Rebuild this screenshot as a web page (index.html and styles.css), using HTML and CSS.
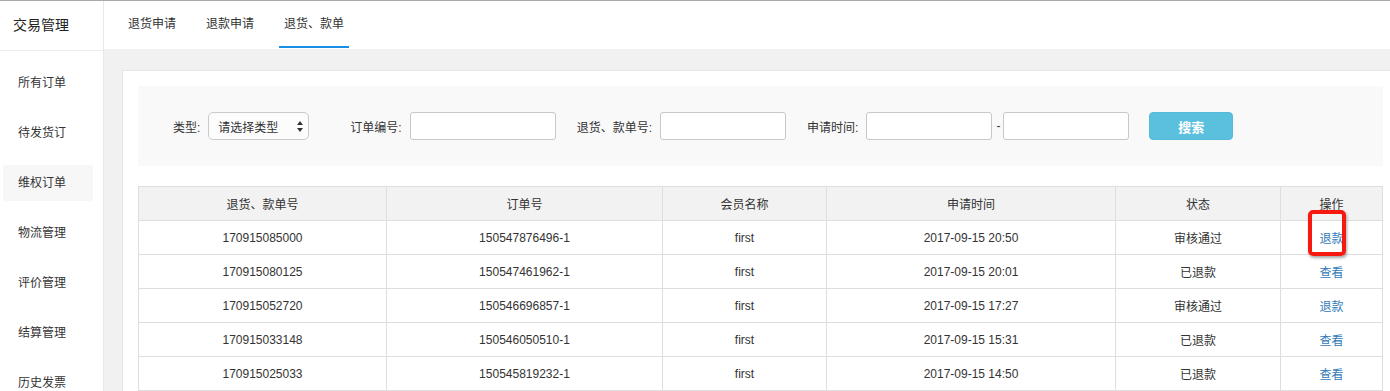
FILE: index.html
```html
<!DOCTYPE html>
<html lang="zh-CN">
<head>
    <meta charset="UTF-8">
    <meta name="viewport" content="width=device-width, initial-scale=1.0">
    <title>交易管理 - 退货、款单</title>
    <link rel="stylesheet" href="styles.css">
</head>
<body>
    <div class="layout">
        <div class="sidebar">
            <div class="sidebar-title">交易管理</div>
            <ul class="menu">
                <li class="menu-item">所有订单</li>
                <li class="menu-item">待发货订</li>
                <li class="menu-item active">维权订单</li>
                <li class="menu-item">物流管理</li>
                <li class="menu-item">评价管理</li>
                <li class="menu-item">结算管理</li>
                <li class="menu-item">历史发票</li>
            </ul>
        </div>

        <div class="main">
            <div class="tabs">
                <a class="tab">退货申请</a>
                <a class="tab">退款申请</a>
                <a class="tab active">退货、款单</a>
            </div>

            <div class="card">
                <div class="search">
                    <label class="search-label">类型:</label>
                    <div class="select">
                        <span>请选择类型</span>
                        <svg class="select-arrows" width="6" height="11" viewBox="0 0 6 11">
                            <path d="M3 0 L6 4 L0 4 Z M3 11 L6 7 L0 7 Z" fill="#333"/>
                        </svg>
                    </div>

                    <label class="search-label gap-wide">订单编号:</label>
                    <input class="input input-order" type="text">

                    <label class="search-label gap">退货、款单号:</label>
                    <input class="input" type="text">

                    <label class="search-label gap">申请时间:</label>
                    <input class="input" type="text">
                    <span class="dash">-</span>
                    <input class="input" type="text">

                    <button class="btn-search">搜索</button>
                </div>

                <table class="data-table">
                    <thead>
                        <tr>
                            <th class="col-no">退货、款单号</th>
                            <th class="col-order">订单号</th>
                            <th class="col-member">会员名称</th>
                            <th class="col-time">申请时间</th>
                            <th class="col-status">状态</th>
                            <th>操作</th>
                        </tr>
                    </thead>
                    <tbody id="tableBody"></tbody>
                </table>
            </div>
        </div>
    </div>

    <script>
        const rows = [
            ["170915085000", "150547876496-1", "first", "2017-09-15 20:50", "审核通过", "退款"],
            ["170915080125", "150547461962-1", "first", "2017-09-15 20:01", "已退款", "查看"],
            ["170915052720", "150546696857-1", "first", "2017-09-15 17:27", "审核通过", "退款"],
            ["170915033148", "150546050510-1", "first", "2017-09-15 15:31", "已退款", "查看"],
            ["170915025033", "150545819232-1", "first", "2017-09-15 14:50", "已退款", "查看"]
        ];

        const tbody = document.getElementById("tableBody");
        rows.forEach((row, index) => {
            const tr = document.createElement("tr");
            row.forEach((value, col) => {
                const td = document.createElement("td");
                if (col === 5) {
                    const link = document.createElement("a");
                    link.className = "action";
                    link.textContent = value;
                    td.appendChild(link);
                    // the first action is marked with a red box
                    if (index === 0) {
                        td.classList.add("marked");
                        const mark = document.createElement("span");
                        mark.className = "mark";
                        td.appendChild(mark);
                    }
                } else {
                    td.textContent = value;
                }
                tr.appendChild(td);
            });
            tbody.appendChild(tr);
        });
    </script>
</body>
</html>
```

FILE: styles.css
```css
html, body {
    margin: 0;
    padding: 0;
    height: 100%;
    overflow: hidden;
}

body {
    font-family: "Liberation Sans", "Noto Sans CJK SC", sans-serif;
    font-size: 12px;
    color: #333;
    background: #fff;
    border-top: 1px solid #a9a9a9;
    box-sizing: border-box;
}

.layout {
    display: flex;
    height: 100%;
}

/* sidebar */
.sidebar {
    width: 103px;
    flex-shrink: 0;
    border-right: 1px solid #e8e8e8;
    background: #fff;
}

.sidebar-title {
    height: 49px;
    line-height: 49px;
    padding-left: 13px;
    font-size: 14px;
    color: #222;
    border-bottom: 1px solid #ececec;
}

.menu {
    list-style: none;
    margin: 0;
    padding: 14px 0 0 3px;
    display: flex;
    flex-direction: column;
    gap: 14px;
}

.menu-item {
    width: 90px;
    height: 36px;
    line-height: 36px;
    padding-left: 15px;
    box-sizing: border-box;
    border-radius: 2px;
    color: #333;
}

.menu-item.active {
    background: #f7f7f7;
}

/* main */
.main {
    flex: 1;
    min-width: 0;
    background: #f1f1f1;
    overflow: hidden;
}

.tabs {
    height: 48px;
    background: #fff;
    display: flex;
    gap: 20px;
    padding-left: 19px;
}

.tab {
    height: 47px;
    line-height: 47px;
    padding: 0 5px;
    box-sizing: border-box;
    color: #333;
    cursor: pointer;
}

.tab.active {
    border-bottom: 2px solid #1a8fe6;
    line-height: 46px;
}

.card {
    width: 1245px;
    margin: 21px 0 0 18px;
    padding: 15px;
    background: #fff;
    border: 1px solid #e6e6e6;
}

/* search */
.search {
    height: 80px;
    padding-left: 35px;
    background: #f9f9f9;
    display: flex;
    align-items: center;
}

.search-label {
    margin-right: 8px;
    white-space: nowrap;
}

.search-label.gap {
    margin-left: 21px;
}

.search-label.gap-wide {
    margin-left: 41px;
    margin-right: 8px;
}

.select {
    width: 101px;
    height: 28px;
    box-sizing: border-box;
    border: 1px solid #cacaca;
    border-radius: 5px;
    background: #fcfcfc;
    display: flex;
    align-items: center;
    justify-content: space-between;
    padding: 0 5px 0 9px;
    color: #333;
}

.input {
    width: 126px;
    height: 28px;
    box-sizing: border-box;
    border: 1px solid #c8c8c8;
    border-radius: 3px;
    background: #fff;
    margin: 0;
    padding: 0 6px;
}

.input-order {
    width: 146px;
}

.dash {
    margin: 0 3px 0 4px;
}

.btn-search {
    width: 84px;
    height: 28px;
    margin-left: 20px;
    border: 1px solid #56bbd9;
    border-radius: 4px;
    background: #5bc0de;
    color: #fff;
    font-family: inherit;
    font-size: 13px;
    font-weight: bold;
    cursor: pointer;
}

/* table */
.data-table {
    width: 100%;
    margin-top: 20px;
    border-collapse: collapse;
    table-layout: fixed;
}

.data-table th,
.data-table td {
    height: 33px;
    padding: 0;
    border: 1px solid #dedede;
    text-align: center;
    font-weight: normal;
    color: #333;
}

.data-table th {
    background: #f2f2f2;
}

.col-no { width: 247px; }
.col-order { width: 275px; }
.col-member { width: 163px; }
.col-time { width: 288px; }
.col-status { width: 164px; }

.action {
    color: #337ab7;
    cursor: pointer;
}

.data-table td.marked {
    position: relative;
}

.mark {
    position: absolute;
    left: 27px;
    top: -11px;
    width: 38px;
    height: 46px;
    box-sizing: border-box;
    border: 4px solid #f5190f;
    border-radius: 5px;
    box-shadow: 1px 2px 3px rgba(0, 0, 0, 0.35);
}
```
